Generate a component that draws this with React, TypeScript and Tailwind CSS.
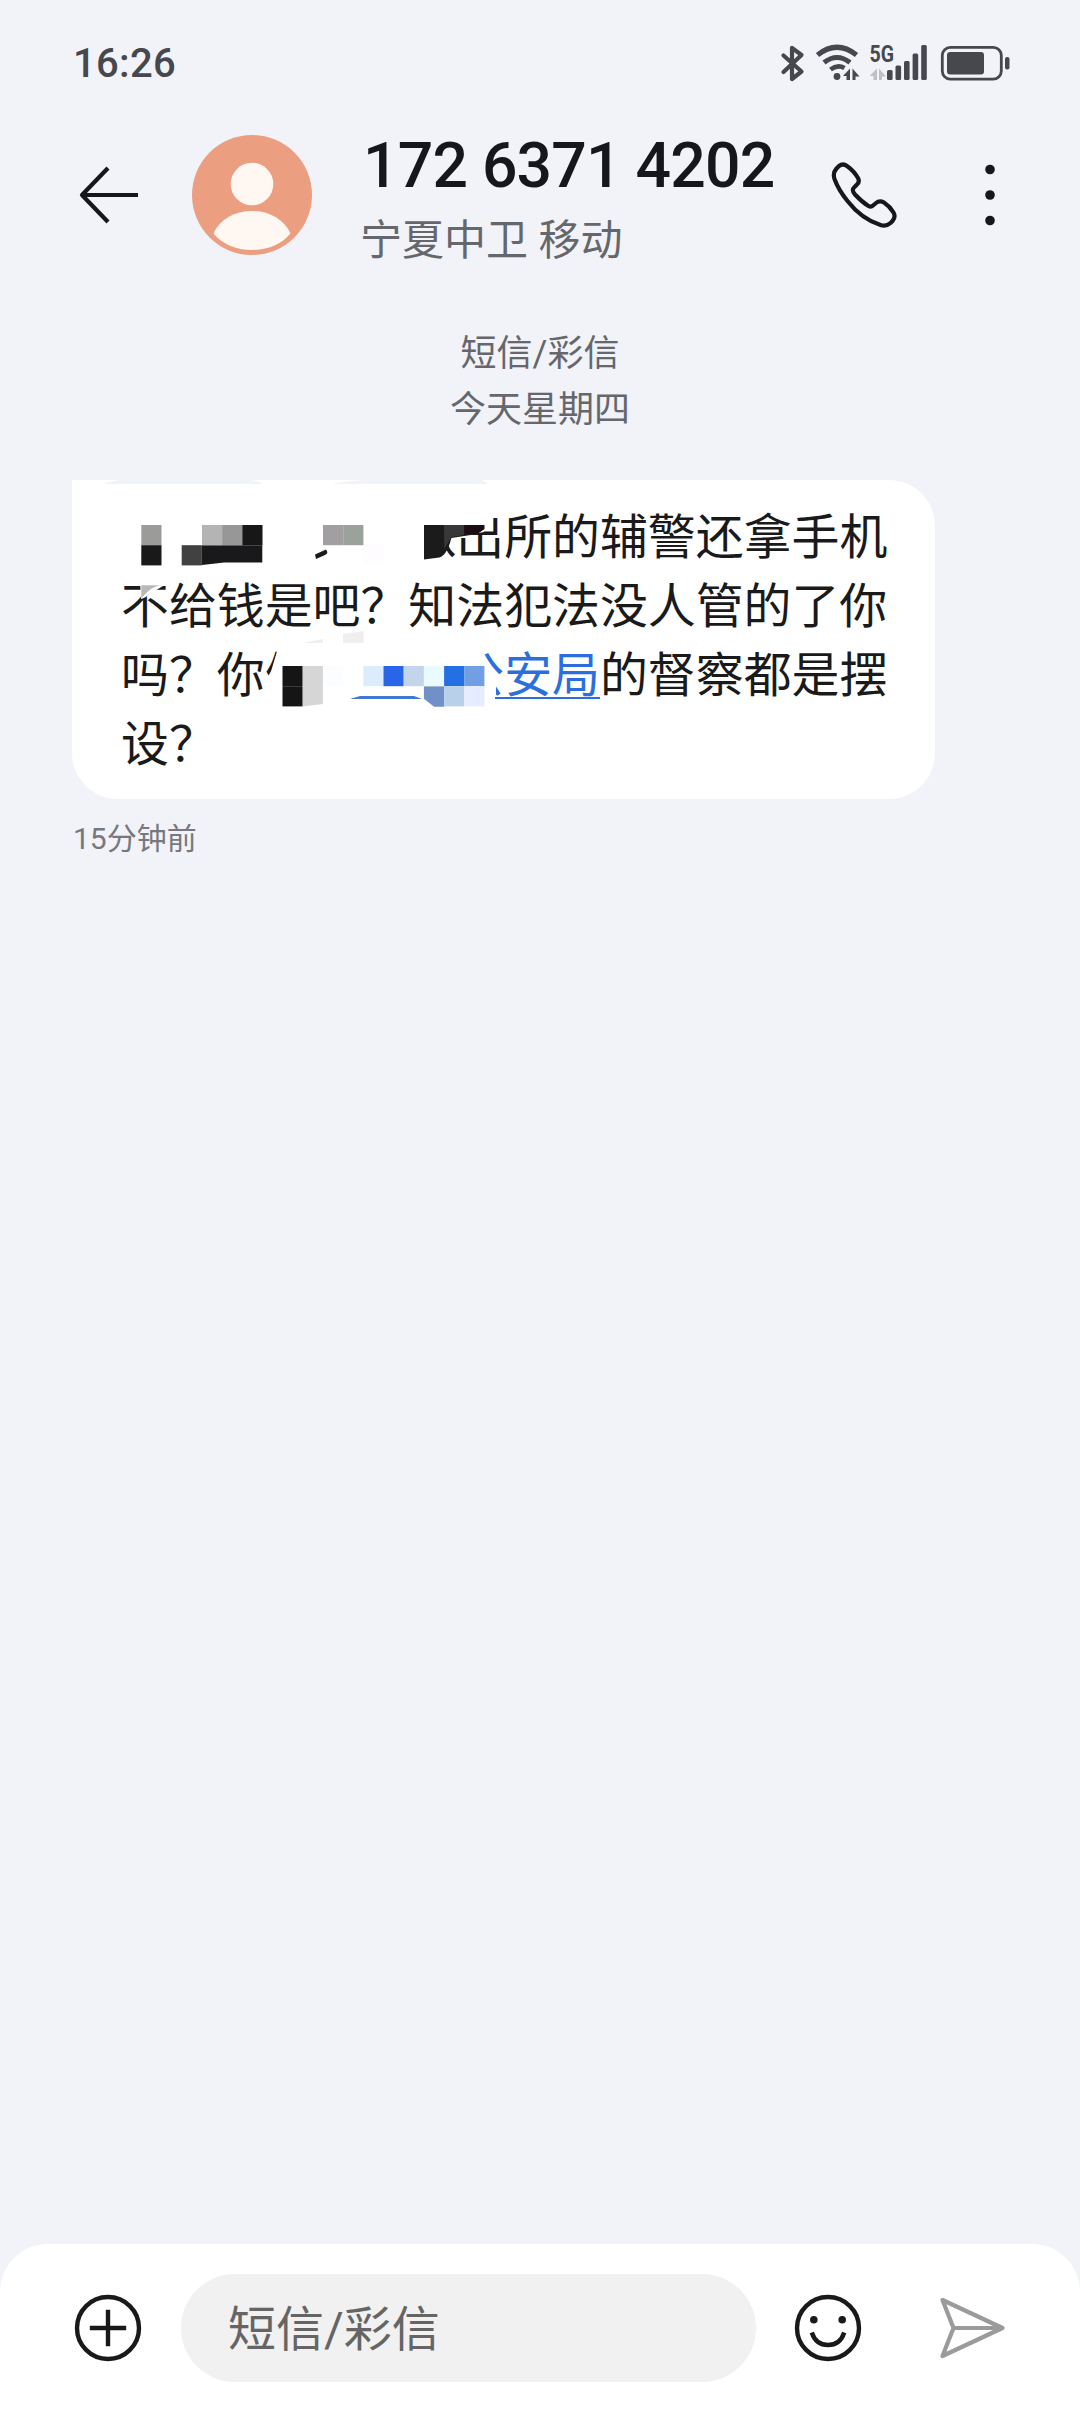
import type { ReactNode } from "react"

const CELL = 20.2

// [x, y, color] of every mosaic block over the message
const mosaic: [number, number, string][] = [
  [141.3, 525, "#9b9c9a"],
  [141.3, 545.2, "#191919"],
  [181.7, 545.2, "#414141"],
  [202, 525, "#b4b4b4"],
  [222.1, 525, "#989798"],
  [242.3, 525, "#171717"],
  [323, 525, "#a19fa1"],
  [343.2, 525, "#9aa29b"],
  [282.5, 666, "#151515"],
  [322.9, 666, "#fbfdff"],
  [363.3, 666, "#dcecff"],
  [383.5, 666, "#2865e8"],
  [403.7, 666, "#c2d5ea"],
  [423.9, 666, "#e9fbff"],
  [444.1, 666, "#256fe5"],
  [464.2, 666, "#719fe3"],
  [282.5, 686.2, "#151515"],
  [302.7, 666, "#d6d6d6"],
  [444.1, 686.2, "#b9d0ea"],
  [464.2, 686.2, "#e6ecff"],
]

function StatusIcons() {
  return (
    <svg width="230" height="60" viewBox="780 33 230 60" fill="none" stroke="#46484e">
      {/* bluetooth */}
      <path
        d="M783.500 55.500l18 16-9.500 7.500V47.800l9.500 7.200-18 17"
        strokeWidth="4.200"
        strokeLinecap="round"
        strokeLinejoin="round"
      />
      {/* wifi */}
      <path d="M817.500 55q19.500-15.500 39 0" strokeWidth="5.200" />
      <path d="M824 62.500q13-10 26 0" strokeWidth="5" />
      <path d="M830.500 69.500q7-5.500 14-1.500" strokeWidth="4.600" />
      <circle cx="837" cy="76.500" r="3.400" fill="#46484e" stroke="none" />
      <path d="M850 80V68.500L843 76h3.500v4zM852.500 68.500V80h3v-3.500h4z" fill="#46484e" stroke="none" />
      {/* mobile data arrows */}
      <path d="M877 80V68.500L869.500 76h4v4zM879 68.500V80h3v-3.500h4z" fill="#bfc0c4" stroke="none" />
      <text
        x="869.500"
        y="61.800"
        fontSize="23.500"
        fontWeight="700"
        textLength="24.500"
        lengthAdjust="spacingAndGlyphs"
        fill="#46484e"
        stroke="none"
        className="font-['Roboto',sans-serif]"
      >
        5G
      </text>
      <g fill="#46484e" stroke="none">
        <rect x="887" y="70" width="5.600" height="10" rx="1.500" />
        <rect x="895.500" y="65.500" width="5.600" height="14.500" rx="1.500" />
        <rect x="904" y="61" width="5.600" height="19" rx="1.500" />
        <rect x="912.600" y="53.500" width="5.600" height="26.500" rx="1.500" />
        <rect x="921.200" y="45" width="5.600" height="35" rx="1.500" />
        <rect x="947" y="52" width="37" height="22.500" rx="3" />
        <rect x="1005" y="57" width="4.500" height="12.500" rx="2" />
      </g>
      <rect x="942.300" y="47.300" width="59" height="31.800" rx="8" strokeWidth="2.800" />
    </svg>
  )
}

function Avatar() {
  return (
    <svg className="ml-[54px]" width="120" height="120" viewBox="0 0 120 120">
      <circle cx="60" cy="60" r="60" fill="#eb9f80" />
      <circle cx="60" cy="49" r="21.300" fill="#fff7f2" />
      <path d="M21.500 98.500C28 84 43 76 60 76s32 8 38.500 22.500C90 109 76 115 60 115s-30-6-38.500-16.500z" fill="#fff7f2" />
    </svg>
  )
}

function Line({ children }: { children: ReactNode }) {
  return <div className="h-[69px] leading-[69px] whitespace-nowrap">{children}</div>
}

function MessageBubble() {
  return (
    <div className="relative ml-[72px] mt-[42px] h-[319px] w-[863px] rounded-[46px] rounded-tl-none bg-white pl-[49px] pt-[24px] text-[47.9px] text-[#1a1a1a]">
      <Line>
        <span className="inline-block w-[287.4px]" />
        派出所的辅警还拿手机
      </Line>
      <Line>不给钱是吧？知法犯法没人管的了你</Line>
      <Line>
        吗？你们
        <span className="inline-block w-[143.7px]" />
        <span className="text-[#2b6fde]">公安局</span>的督察都是摆
      </Line>
      <Line>设？</Line>

      {/* blurred-out names */}
      <svg className="absolute left-0 top-0" width="863" height="319" viewBox="72 480 863 319">
        <path d="M104 484q8-4 20-4h125q8 0 14 4zM332 484q20-4 40-4h110l6 4z" fill="#f0f3f8" />
        <path d="M400 505h84v27l-32 6-9 8v7l10 10-13 8h-40z" fill="#fff" />
        <path d="M140 581h26v3l-22 14-3 1z" fill="#fff" />
        <path d="M424 525h60.300v4l-7 5-26 4q-4 17-12 19.500l-15.300 2z" fill="#1b1b1b" />
        <path d="M444 525h20.300v10l-13 2-7 12z" fill="#383838" />
        <path d="M464.300 525h20v4l-6 4-14 2z" fill="#1d0d12" />
        <path d="M202 545.200h60.300v17.300h-38l-22.300 2.500z" fill="#19191b" />
        <path d="M315 554.500l11-5q3 4-1 5.500l-9 4z" fill="#1b1b1b" />
        <path d="M363 544h21v20h-21z" fill="#fefcfe" />
        <path d="M141.300 585.300h20.200q-9 0-20.200 13z" fill="#b9b9b9" />
        <path d="M302 643l21-4v7h-21zM343 634l20.500-3v14.500h-20.500z" fill="#f0eeef" />
        <path d="M279 648h-1l-9 30v32h218l9-5v-26l-11-20V667h-7v-16l-8-8H282z" fill="#fff" />
        <path d="M350 699l10-3h54l8 3z" fill="#3f79d2" />
        <path d="M423.900 686.200h20.200v20.500h-10l-10.200-8z" fill="#7190c8" />
        {mosaic.map(([x, y, color]) => (
          <rect key={`${x}-${y}`} x={x} y={y} width={CELL} height={CELL} fill={color} />
        ))}
        <path d="M302.700 686h20.200v18l-20.200 2.500z" fill="#d6d6d6" />
        <path d="M495 698h105" stroke="#2b6fde" strokeWidth="2.200" />
      </svg>
    </div>
  )
}

function Composer() {
  return (
    <div className="flex h-[168px] items-start rounded-t-[48px] bg-white pl-[74px] pt-[30px]">
      <div className="flex h-[108px] items-center">
        <svg width="68" height="68" viewBox="0 0 68 68" fill="none" stroke="#191919" strokeWidth="4.400">
          <circle cx="34" cy="34" r="31" />
          <path d="M34 15.800v36.400M15.800 34h36.400" />
        </svg>
        <div className="ml-[39px] flex h-[108px] w-[575px] items-center rounded-full bg-[#f1f1f1] pl-[47px] pt-[3px] text-[48px] text-[#656565]">
          短信/彩信
        </div>
        <svg className="ml-[38px]" width="68" height="68" viewBox="0 0 68 68" fill="none" stroke="#191919" strokeWidth="4.400">
          <circle cx="34" cy="34" r="31" />
          <path d="M17.800 38.500q4 12.500 16.200 12.500t16.200-12.500" />
          <circle cx="19.800" cy="25.800" r="3.800" fill="#191919" stroke="none" />
          <circle cx="48.200" cy="25.800" r="3.800" fill="#191919" stroke="none" />
        </svg>
        <svg className="ml-[77px]" width="68" height="64" viewBox="0 0 68 64" fill="none" stroke="#9b9b9b" strokeWidth="4.200" strokeLinejoin="round">
          <path d="M3.500 4L63.500 32 3.500 60 14.500 32zM14.500 32h49" />
        </svg>
      </div>
    </div>
  )
}

export default function App() {
  return (
    <div
      lang="zh-CN"
      className="flex h-[2412px] w-[1080px] flex-col overflow-hidden bg-[#f1f3f8] font-['Roboto','Noto_Sans_CJK_SC',sans-serif]"
    >
      {/* Status bar */}
      <div className="flex h-[126px] items-center justify-between pl-[73px] pr-[70px]">
        <span className="pt-[2px] text-[40px] font-medium tracking-[0.3px] text-[#46484e]">16:26</span>
        <StatusIcons />
      </div>

      {/* Header */}
      <div className="flex h-[138px] items-center">
        <svg className="ml-[78px]" width="60" height="60" viewBox="0 0 60 60" fill="none" stroke="#15171c" strokeWidth="4.200" strokeLinejoin="round">
          <path d="M30 3L4 30l26 27M4 30h56" />
        </svg>
        <Avatar />
        <div className="ml-[48px] w-[441px]">
          <div className="h-[76px] pl-[3px] pt-[3px] text-[62.5px] font-medium leading-[74px] tracking-[-0.8px] text-[#15171c]">
            172 6371 4202
          </div>
          <div className="h-[62px] pt-[8px] text-[42px] leading-[62px] text-[#65676c]">宁夏中卫 移动</div>
        </div>
        <svg className="ml-[29px]" width="68" height="68" viewBox="830 161 68 68" fill="none" stroke="#15171c" strokeWidth="4.200" strokeLinejoin="round">
          <path d="M836.500 168.500l2.500-2.500q4-3 8 0 7 5 11 12 2 4-1 6.500l-2.500 2.500q-3.500 3 .5 7.500 7 7.500 13.500 11.500 2.500 1.500 4.500-.5l3-2.500q3.500-3 8-.5 6 4 9.500 10 2.500 4.500-1 8.500l-2 2q-4.500 4-10 2-19-6-33-24-9-11-13-22-2-6 2-10.500z" />
        </svg>
        <svg className="ml-[84px]" width="16" height="64" viewBox="0 0 16 64" fill="#15171c">
          <circle cx="8" cy="6.500" r="4.800" />
          <circle cx="8" cy="32" r="4.800" />
          <circle cx="8" cy="57.500" r="4.800" />
        </svg>
      </div>

      {/* Conversation */}
      <div className="flex-1">
        <div className="mt-[62px] text-center text-[36px] leading-[56px] text-[#65676c]">
          <p>短信/彩信</p>
          <p>今天星期四</p>
        </div>
        <MessageBubble />
        <p className="ml-[73px] mt-[20px] text-[30px] leading-[40px] text-[#77787d]">15分钟前</p>
      </div>

      <Composer />
    </div>
  )
}
